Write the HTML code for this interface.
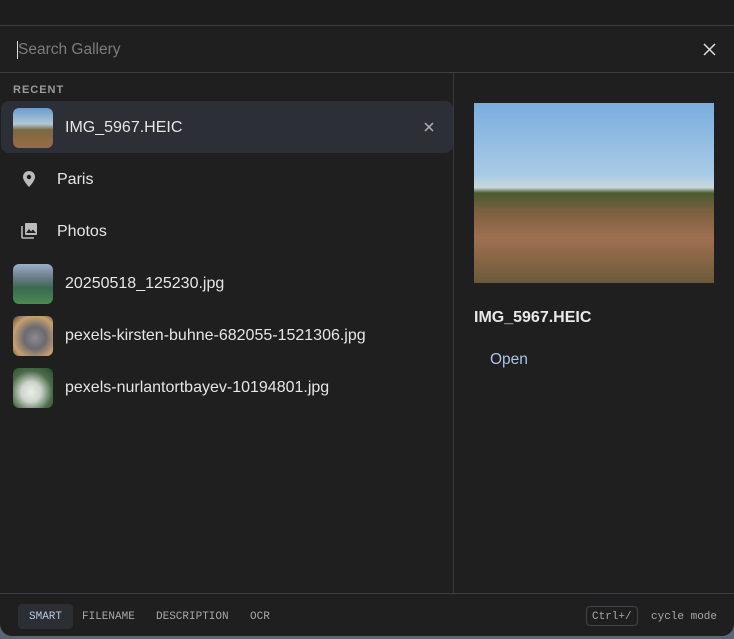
<!DOCTYPE html>
<html><head><meta charset="utf-8"><style>
*{box-sizing:border-box;margin:0;padding:0}
body{width:734px;height:639px;background:#5a6677;font-family:"Liberation Sans",sans-serif;overflow:hidden;position:relative}
.win{position:absolute;left:0;top:0;width:734px;height:636px;background:#1f1f1f;border-radius:0 0 12px 12px;overflow:hidden}
.top{position:absolute;left:0;top:0;width:734px;height:26px;background:#1d1d1d;border-bottom:1px solid #3a3d44}
.search{position:absolute;left:17px;top:41px;font-size:15.5px;color:#7c7c7c;border-left:1px solid #ddd;line-height:18px}
.close{position:absolute;left:703px;top:43px}
.hl{position:absolute;left:0;width:734px;height:1px;background:#3c3f48}
.vl{position:absolute;left:453px;top:73px;width:1px;height:520px;background:#363840}
.rec{position:absolute;left:13px;top:84px;font-size:11px;font-weight:bold;letter-spacing:1px;color:#9a9a9a}
.row{position:absolute;left:1px;width:452px;height:52px;font-size:16px;color:#e6e6e6}
.row.sel{background:#2c2f35;border-radius:8px}
.row span{position:absolute;top:18px}
.th{position:absolute;left:12px;top:7px;width:40px;height:40px;border-radius:6px}
.prev{position:absolute;left:474px;top:103px;width:240px;height:180px;background:linear-gradient(180deg,#7aaee0 0%,#a8cbe5 40%,#c8d8dc 47%,#4a5a30 50%,#7a6040 60%,#a07050 75%,#6a5a3a 100%)}
.ptitle{position:absolute;left:474px;top:309px;font-size:16px;font-weight:bold;color:#e8e8e8}
.open{position:absolute;left:490px;top:351px;font-size:15.5px;color:#a9c3ec}
.foot{position:absolute;top:611px;font-family:"Liberation Mono",monospace;font-size:11px;color:#a8a8a8}
</style></head><body>
<div class="win">
<div class="top"></div>
<div class="search">Search Gallery</div>
<svg class="close" width="13" height="13" viewBox="0 0 13 13"><path d="M1 1L12 12M12 1L1 12" stroke="#e0e0e0" stroke-width="1.5"/></svg>
<div class="hl" style="top:72px"></div>
<div class="vl"></div>
<div class="rec">RECENT</div>
<div class="row sel" style="top:101px"><div class="th" style="background:linear-gradient(180deg,#6a9ccc 0%,#b0c8d8 40%,#7a6a40 55%,#9a6a48 100%)"></div><span style="left:64px">IMG_5967.HEIC</span>
<svg style="position:absolute;left:423px;top:21px" width="10" height="10" viewBox="0 0 10 10"><path d="M1 1L9 9M9 1L1 9" stroke="#b0b0b0" stroke-width="1.5"/></svg></div>
<div class="row" style="top:153px"><svg style="position:absolute;left:21px;top:18px" width="14" height="16" viewBox="0 0 14 16"><path d="M7 0C3.5 0 1 2.6 1 6c0 4 6 10 6 10s6-6 6-10C13 2.6 10.5 0 7 0z" fill="#bbb"/><circle cx="7" cy="6" r="2.2" fill="#1f1f1f"/></svg><span style="left:56px">Paris</span></div>
<div class="row" style="top:205px"><svg style="position:absolute;left:20px;top:17px" width="17" height="17" viewBox="0 0 17 17"><rect x="4" y="1" width="12" height="12" rx="1" fill="#bbb"/><path d="M5 11l3-4 2 2.5 2-2 3 3.5z" fill="#1f1f1f"/><path d="M1 4v11a1 1 0 0 0 1 1h11" stroke="#bbb" stroke-width="1.6" fill="none"/></svg><span style="left:56px">Photos</span></div>
<div class="row" style="top:257px"><div class="th" style="background:linear-gradient(180deg,#9ab0c8 0%,#6a7a88 35%,#3a6a50 60%,#4a8a50 100%)"></div><span style="left:64px">20250518_125230.jpg</span></div>
<div class="row" style="top:309px"><div class="th" style="background:radial-gradient(circle at 55% 55%,#8a8a90 0%,#6a6a70 35%,#c8a070 70%,#5a4a38 100%)"></div><span style="left:64px">pexels-kirsten-buhne-682055-1521306.jpg</span></div>
<div class="row" style="top:361px"><div class="th" style="background:radial-gradient(circle at 45% 60%,#e8eee8 0%,#cfd6cc 30%,#4a6a48 65%,#2a4a30 100%)"></div><span style="left:64px">pexels-nurlantortbayev-10194801.jpg</span></div>
<div class="prev"></div>
<div class="ptitle">IMG_5967.HEIC</div>
<div class="open">Open</div>
<div class="hl" style="top:593px"></div>
<div style="position:absolute;left:18px;top:604px;width:55px;height:25px;background:#2b2e33;border-radius:4px"></div>
<div class="foot" style="left:29px;color:#b9c8e0">SMART</div>
<div class="foot" style="left:82px">FILENAME</div>
<div class="foot" style="left:156px">DESCRIPTION</div>
<div class="foot" style="left:250px">OCR</div>
<div style="position:absolute;left:586px;top:606px;width:52px;height:20px;border:1px solid #3f4248;border-radius:4px"></div>
<div class="foot" style="left:592px">Ctrl+/</div>
<div class="foot" style="left:651px">cycle mode</div>
</div>
</body></html>
